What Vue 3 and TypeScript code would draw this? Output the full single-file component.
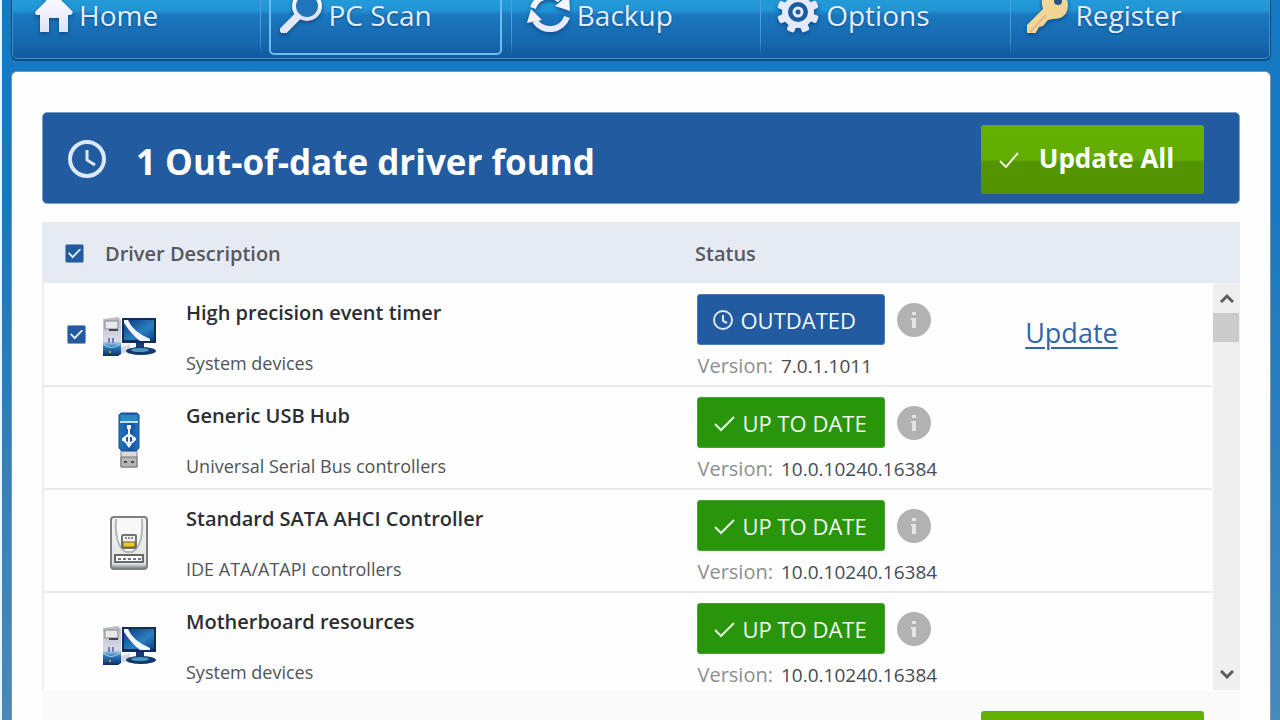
<script setup lang="ts">
import { ref } from 'vue'

type IconName = 'computer' | 'usb' | 'disk'

interface Driver {
  name: string
  category: string
  version: string
  outdated: boolean
  icon: IconName
}

interface NavItem {
  id: string
  label: string
}

const navItems: NavItem[] = [
  { id: 'home', label: 'Home' },
  { id: 'scan', label: 'PC Scan' },
  { id: 'backup', label: 'Backup' },
  { id: 'options', label: 'Options' },
  { id: 'register', label: 'Register' },
]

const drivers: Driver[] = [
  { name: 'High precision event timer', category: 'System devices', version: '7.0.1.1011', outdated: true, icon: 'computer' },
  { name: 'Generic USB Hub', category: 'Universal Serial Bus controllers', version: '10.0.10240.16384', outdated: false, icon: 'usb' },
  { name: 'Standard SATA AHCI Controller', category: 'IDE ATA/ATAPI controllers', version: '10.0.10240.16384', outdated: false, icon: 'disk' },
  { name: 'Motherboard resources', category: 'System devices', version: '10.0.10240.16384', outdated: false, icon: 'computer' },
]

const active = ref('scan')
const allChecked = ref(true)
const timerChecked = ref(true)
const teeth = [0, 45, 90, 135, 180, 225, 270, 315]
</script>

<template>
  <div class="window">
    <svg class="defs" width="0" height="0" aria-hidden="true">
      <defs>
        <linearGradient id="silver" x1="0" y1="0" x2="0" y2="1">
          <stop offset="0" stop-color="#ffffff" />
          <stop offset="1" stop-color="#dfe2f8" />
        </linearGradient>
        <linearGradient id="gold" x1="0" y1="0" x2="1" y2="1">
          <stop offset="0" stop-color="#f7dc9c" />
          <stop offset="1" stop-color="#efd08c" />
        </linearGradient>
        <linearGradient id="tower" x1="0" y1="0" x2="0" y2="1">
          <stop offset="0" stop-color="#b9bcc6" />
          <stop offset="0.62" stop-color="#d9dbe8" />
          <stop offset="0.76" stop-color="#2d7fc0" />
          <stop offset="1" stop-color="#0f2c66" />
        </linearGradient>
        <linearGradient id="screen" x1="0" y1="0" x2="1" y2="1">
          <stop offset="0" stop-color="#0d3a80" />
          <stop offset="0.6" stop-color="#2a7fbe" />
          <stop offset="1" stop-color="#123f86" />
        </linearGradient>
        <linearGradient id="stick" x1="0" y1="0" x2="1" y2="0">
          <stop offset="0" stop-color="#2273bd" />
          <stop offset="0.6" stop-color="#1254a6" />
          <stop offset="1" stop-color="#2a74bd" />
        </linearGradient>
        <linearGradient id="shell" x1="0" y1="0" x2="0" y2="1">
          <stop offset="0" stop-color="#f4f4f4" />
          <stop offset="0.9" stop-color="#e2e4e4" />
          <stop offset="1" stop-color="#6d7272" />
        </linearGradient>
      </defs>
    </svg>

    <nav class="nav" aria-label="Main">
      <button
        v-for="item in navItems"
        :key="item.id"
        type="button"
        class="nav-item"
        :class="{ active: active === item.id }"
        @click="active = item.id"
      >
        <svg class="nav-icon" viewBox="0 0 44 44" aria-hidden="true">
          <path v-if="item.id === 'home'" fill="url(#silver)" d="M25 4 L44 23 L42 26 H39 V43 H30 V29 H20 V43 H11 V26 H7 L6 23 L17 12 V5 H22 V7 Z" />
          <g v-else-if="item.id === 'scan'">
            <circle cx="29" cy="17" r="13" fill="#1f74bb" stroke="url(#silver)" stroke-width="4" />
            <path d="M19 28 L6 41" stroke="#e4e6fa" stroke-width="8" stroke-linecap="round" />
          </g>
          <g v-else-if="item.id === 'backup'">
            <path d="M6 19 A17 17 0 0 1 33 11" fill="none" stroke="#f4f6ff" stroke-width="6" />
            <path d="M40 28 A18 18 0 0 1 8 32" fill="none" stroke="#e8eafc" stroke-width="6" />
            <path d="M28 17 L43 22 L42 6 Z" fill="#f4f6ff" />
            <path d="M0 34 L4 20 L15 31 Z" fill="#f0f2ff" />
          </g>
          <g v-else-if="item.id === 'options'" fill="#e6e9fb">
            <rect v-for="a in teeth" :key="a" x="18" y="2" width="8" height="12" rx="2" :transform="`rotate(${a + 22} 22 23)`" />
            <circle cx="22" cy="23" r="16" />
            <circle cx="22" cy="23" r="10" fill="#1b5c9e" />
            <circle cx="22" cy="23" r="4" fill="none" stroke="#e6e9fb" stroke-width="3" />
          </g>
          <g v-else>
            <path d="M1 36 L17 20 Q12 4 28 2 Q42 2 42 17 Q41 30 27 30 L22 31 L17 37 L13 38 L9 45 L1 45 Z" fill="url(#gold)" />
            <path d="M4 43 L20 26" stroke="#e3b598" stroke-width="2" />
            <circle cx="32" cy="12" r="4" fill="#24568c" />
          </g>
        </svg>
        <span>{{ item.label }}</span>
      </button>
    </nav>

    <main class="panel">
      <section class="banner">
        <svg class="banner-clock" viewBox="0 0 38 38" fill="none" stroke="#dce8fa" aria-hidden="true">
          <circle cx="19" cy="19" r="17" stroke-width="4" />
          <path d="M19 10 V20 L27 25" stroke-width="3" />
        </svg>
        <h1>1 Out-of-date driver found</h1>
        <button type="button" class="green-button">
          <svg viewBox="0 0 20 16" fill="none" stroke="#e8f4da" stroke-width="2" aria-hidden="true">
            <path d="M1 9 L7 15 L19 1" />
          </svg>
          <span>Update All</span>
        </button>
      </section>

      <section class="list">
        <table>
          <thead>
            <tr>
              <th class="check-cell"><input v-model="allChecked" type="checkbox" aria-label="Select all drivers" /></th>
              <th class="head-name">Driver Description</th>
              <th class="head-status">Status</th>
            </tr>
          </thead>
          <tbody>
            <tr v-for="(driver, index) in drivers" :key="driver.name">
              <td class="check-cell">
                <input v-if="index === 0" v-model="timerChecked" type="checkbox" :aria-label="driver.name" />
              </td>
              <td class="icon-cell">
                <svg v-if="driver.icon === 'computer'" class="computer" viewBox="0 0 54 40" aria-hidden="true">
                  <path d="M1 2 L16 0 L19 3 V37 L16 39 H1 Z" fill="url(#tower)" />
                  <rect x="3" y="4" width="13" height="8" fill="#e8e8ea" stroke="#85878e" />
                  <path d="M7 13 H16" stroke="#44474f" stroke-width="2" />
                  <path d="M7 21 V26 M11 21 V26" stroke="#6c82b4" stroke-width="2" />
                  <path d="M1 27 Q9 34 18 27" fill="none" stroke="#a8d3f2" />
                  <circle cx="8" cy="35" r="1" fill="#f0b040" />
                  <path d="M19 30 L28 27 V34 L19 37 Z" fill="#d4d7e6" />
                  <rect x="20" y="1" width="34" height="25" fill="#102d60" />
                  <rect x="22" y="3" width="30" height="20" fill="url(#screen)" />
                  <path d="M22 3 H26 Q31 15 48 22 V24 H38 Q30 18 22 6 Z" fill="#f2f8ff" />
                  <path d="M34 26 H42 V31 H34 Z" fill="#173c72" />
                  <ellipse cx="39" cy="34" rx="15" ry="4" fill="#17386d" />
                  <ellipse cx="38" cy="33" rx="9" ry="2" fill="#4a98bf" />
                </svg>
                <svg v-else-if="driver.icon === 'usb'" class="usb" viewBox="0 0 22 56" aria-hidden="true">
                  <path d="M3 38 H19 V55 H3 Z" fill="#dadada" stroke="#858585" />
                  <path d="M3 45 H19 V55 H3 Z" fill="#b5b5b5" stroke="#747474" />
                  <rect x="6" y="49" width="3" height="2" fill="#4c4c4c" />
                  <rect x="13" y="49" width="3" height="2" fill="#4c4c4c" />
                  <path d="M3 1 H19 L21 3 V36 L18 39 H4 L1 36 V3 Z" fill="url(#stick)" stroke="#174a84" />
                  <path d="M3 3 H19 V9 H3 Z" fill="#278dc4" />
                  <path d="M2 10 H20" stroke="#b9e2f6" stroke-width="2" />
                  <path d="M11 15 V33 M11 22 L6 26 V28 Q7 31 11 31 M11 22 L16 26 V28 Q15 31 11 31" fill="none" stroke="#f2f8ff" stroke-width="2" />
                  <path d="M9 13 H13 V17 H9 Z M8 32 H14 L11 36 Z M4 26 H8 V29 H4 Z" fill="#fff" />
                  <circle cx="16" cy="27" r="2" fill="#fff" />
                </svg>
                <svg v-else class="disk" viewBox="0 0 38 54" aria-hidden="true">
                  <rect x="1" y="1" width="36" height="52" rx="3" fill="url(#shell)" stroke="#7c8080" stroke-width="2" />
                  <path d="M6 3 C5 16 7 32 16 36 H22 C31 32 33 16 32 3" fill="#f8f8f8" stroke="#b6b8b8" stroke-width="2" />
                  <rect x="12" y="19" width="14" height="13" rx="1" fill="#f2f2f2" stroke="#737575" stroke-width="2" />
                  <path d="M15 22 H23" stroke="#8e8e8e" stroke-width="2" stroke-dasharray="2 1" />
                  <rect x="13" y="26" width="12" height="5" fill="#efca22" stroke="#756829" />
                  <rect x="5" y="39" width="28" height="7" fill="#fff" stroke="#666969" stroke-width="2" />
                  <path d="M8 43 H31" stroke="#777" stroke-width="2" stroke-dasharray="3 2" />
                </svg>
              </td>
              <td class="name-cell">
                <strong>{{ driver.name }}</strong>
                <span>{{ driver.category }}</span>
              </td>
              <td class="status-cell">
                <div class="status-line">
                  <span class="badge" :class="{ outdated: driver.outdated }">
                    <svg v-if="driver.outdated" viewBox="0 0 20 20" fill="none" stroke="#dce9fa" stroke-width="2" aria-hidden="true">
                      <circle cx="10" cy="10" r="9" />
                      <path d="M10 5 V11 L14 13" />
                    </svg>
                    <svg v-else class="tick" viewBox="0 0 22 20" fill="none" stroke="#e6f6e0" stroke-width="2" aria-hidden="true">
                      <path d="M2 11 L8 17 L21 4" />
                    </svg>
                    <span>{{ driver.outdated ? 'OUTDATED' : 'UP TO DATE' }}</span>
                  </span>
                  <button type="button" class="info" :aria-label="`About ${driver.name}`">
                    <svg viewBox="0 0 34 34" aria-hidden="true">
                      <circle cx="17" cy="17" r="17" fill="#b2b2b2" />
                      <path d="M15 9 H19 V12 H15 Z M14 15 H19 V25 H15 V17 H14 Z" fill="#e4e4e4" />
                    </svg>
                  </button>
                </div>
                <p><span>Version:</span> <b>{{ driver.version }}</b></p>
              </td>
              <td class="action-cell">
                <a v-if="driver.outdated" href="#update">Update</a>
              </td>
            </tr>
          </tbody>
        </table>
        <div class="scrollbar">
          <button type="button" aria-label="Scroll up">
            <svg viewBox="0 0 14 10" fill="none" stroke="#5c5c5c" stroke-width="3" aria-hidden="true"><path d="M1 9 L7 3 L13 9" /></svg>
          </button>
          <div class="thumb"></div>
          <button type="button" aria-label="Scroll down">
            <svg viewBox="0 0 14 10" fill="none" stroke="#5c5c5c" stroke-width="3" aria-hidden="true"><path d="M1 1 L7 7 L13 1" /></svg>
          </button>
        </div>
      </section>

      <footer class="footer">
        <button type="button" class="green-button" aria-label="Continue"></button>
      </footer>
    </main>
  </div>
</template>

<style>
html,
body {
  margin: 0;
  overflow: hidden;
}
</style>

<style scoped>
.window {
  box-sizing: border-box;
  height: 100vh;
  display: flex;
  flex-direction: column;
  gap: 10px;
  padding: 0 9px;
  border-left: 2px solid #eef5fa;
  background: linear-gradient(#1579c3 0, #1778bf 200px, #478abb 100%);
  font-family: "Open Sans", "Noto Sans", sans-serif;
}

.defs {
  position: absolute;
}

button {
  font: inherit;
  border: 0;
  padding: 0;
  background: none;
  cursor: pointer;
}

.nav {
  box-sizing: border-box;
  flex: none;
  height: 92px;
  margin-top: -31px;
  display: grid;
  grid-template-columns: 249fr 249fr 249fr 249fr 260fr;
  border: 1px solid #0b4a7e;
  border-bottom-width: 2px;
  border-radius: 6px;
  background: linear-gradient(#2ba4de 0, #2196d6 40px, #1b78be 45px, #1668ae 72px, #1059a0 100%);
  box-shadow: inset 0 0 0 1px #4b90c4;
}

.nav-item {
  display: flex;
  align-items: center;
  gap: 6px;
  padding: 0 0 0 15px;
  color: #e2efff;
  font-size: 28px;
  line-height: 28px;
  text-align: left;
  text-shadow: 0 1px 2px #0d4a86;
}

.nav-item + .nav-item {
  border-left: 1px solid;
  border-image: linear-gradient(#4fa0d8 60%, #3f8dc8 80%, transparent 95%) 1;
}

.nav-item:first-child {
  padding-left: 17px;
  border-right: 1px solid;
  border-image: linear-gradient(#4fa0d8 60%, #3f8dc8 80%, transparent 95%) 1;
}

.nav-item.nav-item.active {
  margin: 0 9px 4px 8px;
  padding: 4px 0 0 7px;
  border: 2px solid #6bbdf0;
  border-image: none;
  border-radius: 5px;
}

.nav-icon {
  flex: none;
  width: 44px;
  height: 44px;
  margin-bottom: 8px;
  filter: drop-shadow(0 2px 2px #0e4c88);
}

.panel {
  flex: 1;
  min-height: 0;
  display: flex;
  flex-direction: column;
  padding: 40px 30px 0;
  border: 1px solid #7796b3;
  border-bottom: 0;
  border-radius: 6px 6px 0 0;
  background: #fefefe;
}

.banner {
  box-sizing: border-box;
  flex: none;
  height: 92px;
  display: flex;
  align-items: center;
  padding: 2px 35px 0 25px;
  border: 1px solid #7f9fcb;
  border-radius: 5px;
  background: #225ba0;
}

.banner-clock {
  width: 38px;
  height: 38px;
}

h1 {
  flex: 1;
  margin: 6px 0 0 30px;
  color: #fff;
  font-size: 35px;
  font-weight: 700;
  line-height: 48px;
  white-space: nowrap;
}

.green-button {
  box-sizing: border-box;
  flex: none;
  display: flex;
  align-items: center;
  justify-content: center;
  gap: 20px;
  width: 223px;
  height: 69px;
  padding: 0 12px 2px 0;
  border-radius: 3px;
  background: linear-gradient(#64b000 0, #62ad00 50%, #539500 54%, #539300 100%);
  color: #fff;
  font-size: 26px;
  font-weight: 700;
  line-height: 36px;
}

.green-button svg {
  width: 20px;
  height: 16px;
  margin-top: 4px;
}

.list {
  position: relative;
  flex: none;
  margin-top: 18px;
}

table,
thead,
tbody {
  display: block;
}

tr {
  display: grid;
  grid-template-columns: 60px 82px 511fr 329fr 187fr;
}

th,
td {
  padding: 0;
  text-align: left;
}

thead tr {
  box-sizing: border-box;
  grid-template-columns: 63px 590fr 545fr;
  align-items: center;
  height: 61px;
  padding-top: 2px;
  background: #e6ebf3;
}

th {
  color: #55585e;
  font-size: 20px;
  font-weight: 600;
  line-height: 30px;
}

tbody {
  box-sizing: border-box;
  height: 408px;
  overflow: hidden;
  padding: 1px 28px 0 0;
  border-left: 2px solid #eaeef5;
}

tbody tr {
  box-sizing: border-box;
  height: 103px;
  border-bottom: 2px solid #e8e9eb;
}

.check-cell,
.icon-cell,
.action-cell {
  display: flex;
  align-items: center;
}

.check-cell {
  padding-left: 23px;
}

.icon-cell {
  justify-content: center;
  padding: 4px 32px 0 0;
}

input {
  appearance: none;
  display: grid;
  place-items: center;
  width: 19px;
  height: 19px;
  margin: 0;
  border: 1px solid #7ca0cd;
  border-radius: 2px;
  background: #225ba0;
}

input:checked::after {
  content: "";
  width: 13px;
  height: 10px;
  background: #e3edfa;
  clip-path: polygon(0 50%, 10% 38%, 36% 72%, 90% 0, 100% 12%, 36% 100%);
}

.computer {
  flex: none;
  width: 54px;
  height: 40px;
}

.usb {
  width: 22px;
  height: 56px;
}

.disk {
  width: 38px;
  height: 54px;
}

.name-cell {
  display: flex;
  flex-direction: column;
  gap: 22px;
  padding-top: 15px;
  line-height: 28px;
}

.name-cell strong {
  color: #2b2e33;
  font-size: 20px;
  font-weight: 700;
  font-weight: 600;
}

.name-cell span {
  color: #505358;
  font-size: 18px;
}

.status-cell {
  padding-top: 10px;
}

.status-line {
  display: flex;
  align-items: center;
  gap: 12px;
}

.badge {
  box-sizing: border-box;
  display: flex;
  align-items: center;
  gap: 8px;
  width: 188px;
  height: 51px;
  padding-left: 15px;
  border: 1px solid #46a432;
  border-radius: 3px;
  background: #28950a;
  color: #f4faf6;
  font-size: 22px;
  line-height: 30px;
  white-space: nowrap;
}

.badge.outdated {
  border-color: #4c7cb7;
  background: #225ba0;
}

.badge svg {
  flex: none;
  width: 20px;
  height: 20px;
}

.badge .tick {
  width: 22px;
}

.info,
.info svg {
  display: block;
  width: 34px;
  height: 34px;
}

.status-cell p {
  display: flex;
  gap: 8px;
  margin: 7px 0 0 1px;
  font-size: 20px;
  line-height: 28px;
  color: #8e8e8e;
}

.status-cell b {
  color: #484b50;
  font-size: 19px;
  font-weight: 400;
}

.action-cell {
  padding-bottom: 4px;
}

.action-cell a {
  color: #2e66a9;
  font-size: 27px;
  line-height: 36px;
  text-decoration-thickness: 2px;
  text-underline-offset: 4px;
}

.scrollbar {
  position: absolute;
  top: 61px;
  right: 0;
  bottom: 1px;
  display: flex;
  flex-direction: column;
  width: 27px;
  background: #efefef;
}

.scrollbar button {
  height: 30px;
  display: grid;
  place-items: center;
}

.scrollbar button:last-child {
  margin-top: auto;
}

.scrollbar svg {
  width: 14px;
  height: 10px;
}

.thumb {
  height: 29px;
  margin-right: 1px;
  background: #cbcbcb;
}

.footer {
  flex: 1;
  display: flex;
  justify-content: flex-end;
  align-items: flex-start;
  padding: 20px 36px 0 0;
  background: #fafafa;
}
</style>
